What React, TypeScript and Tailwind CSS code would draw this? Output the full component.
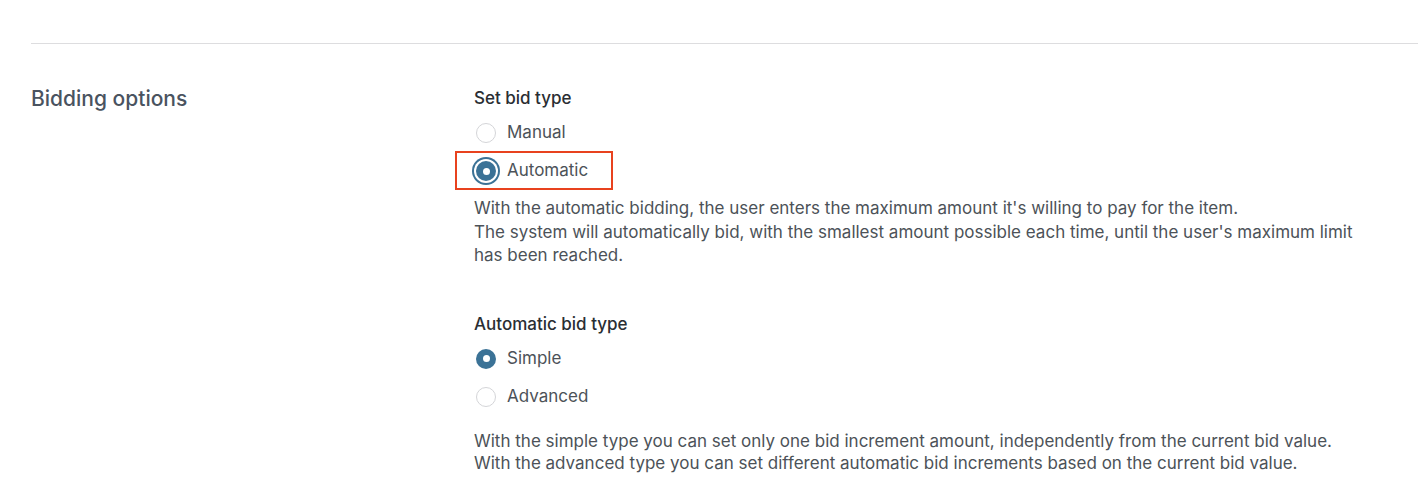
import React from 'react';

type RadioProps = {
  label: string;
  checked?: boolean;
  focused?: boolean;
  highlighted?: boolean;
};

function Radio({ label, checked, focused, highlighted }: RadioProps) {
  return (
    <div className="relative flex h-[38px] items-center">
      {highlighted && (
        <div className="pointer-events-none absolute top-[-1px] left-[-19px] h-[39px] w-[158px] border-2 border-[#e8421e]" />
      )}
      <span
        className={`ml-[2px] flex h-5 w-5 shrink-0 items-center justify-center rounded-full ${
          checked ? 'bg-[#3b7296]' : 'border border-[#d4d5d8] bg-white'
        } ${focused ? 'ring-2 ring-[#3b7296] ring-offset-2 ring-offset-white' : ''}`}
      >
        {checked && <span className="h-[7px] w-[7px] rounded-full bg-white" />}
      </span>
      <span className="ml-[11px] text-[17px] text-[#4c5258]">{label}</span>
    </div>
  );
}

export default function App() {
  return (
    <div className="min-h-[498px] bg-white font-['Inter',_'Noto_Sans',_sans-serif] antialiased">
      <div className="h-[43px]" />
      <div className="ml-[31px] border-t border-[#dddddf]" />
      <div className="flex pl-[31px] pt-[42px]">
        <div className="w-[443px] shrink-0">
          <h2 className="text-[21px] leading-[26px] font-medium text-[#4a5360]">Bidding options</h2>
        </div>
        <div className="flex-1">
          <div className="text-[17px] leading-6 font-medium text-[#2a2e33]">Set bid type</div>
          <div className="mt-1">
            <Radio label="Manual" />
            <Radio label="Automatic" checked focused highlighted />
          </div>
          <p className="mt-[7px] whitespace-nowrap text-[17px] leading-[23.5px] text-[#4c5258]">
            With the automatic bidding, the user enters the maximum amount it's willing to pay for the item.
            <br />
            The system will automatically bid, with the smallest amount possible each time, until the user's maximum limit
            <br />
            has been reached.
          </p>

          <div className="mt-[44px] text-[17px] leading-6 font-medium text-[#2a2e33]">Automatic bid type</div>
          <div className="mt-1">
            <Radio label="Simple" checked />
            <Radio label="Advanced" />
          </div>
          <p className="mt-[14px] whitespace-nowrap text-[17px] leading-[22.5px] text-[#4c5258]">
            With the simple type you can set only one bid increment amount, independently from the current bid value.
            <br />
            With the advanced type you can set different automatic bid increments based on the current bid value.
          </p>
        </div>
      </div>
    </div>
  );
}
